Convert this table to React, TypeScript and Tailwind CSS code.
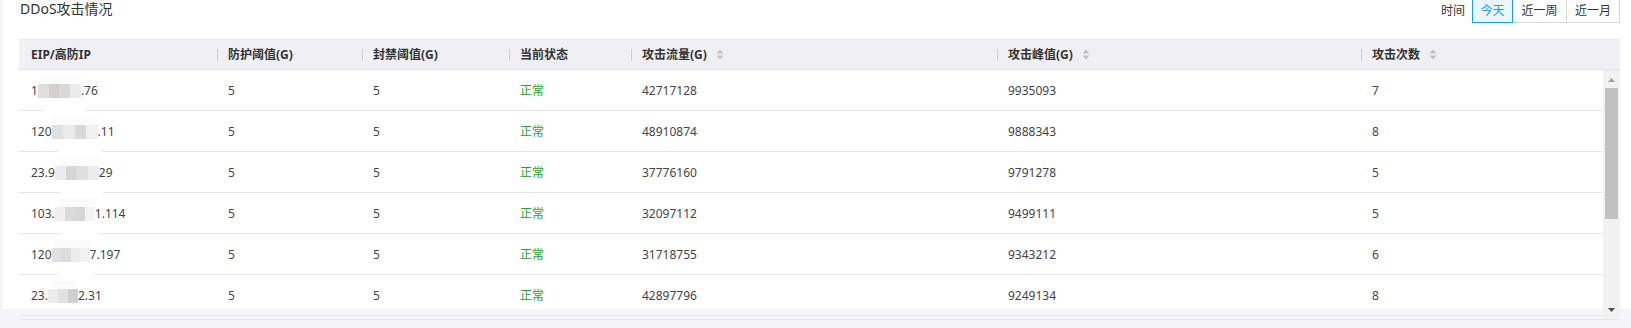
import React from "react";

type Row = {
  pre: string;
  blurW: number;
  suf: string;
  shades: string[];
  patch: boolean;
  v: [string, string, string, string, string];
};

const rows: Row[] = [
  { pre: "1", blurW: 43, suf: ".76", shades: ["#dedede", "#d2d0cf", "#d9d9d9", "#ebebeb"], patch: true, v: ["5", "5", "42717128", "9935093", "7"] },
  { pre: "120", blurW: 46, suf: ".11", shades: ["#e0e0e0", "#eaeaea", "#d9d9d9", "#f0f0f0"], patch: true, v: ["5", "5", "48910874", "9888343", "8"] },
  { pre: "23.9", blurW: 44, suf: "29", shades: ["#ececec", "#d6d6d6", "#dfdfdf", "#ececec"], patch: true, v: ["5", "5", "37776160", "9791278", "5"] },
  { pre: "103.", blurW: 40, suf: "1.114", shades: ["#efefef", "#dadade", "#d6d6d6", "#f2f2f2"], patch: true, v: ["5", "5", "32097112", "9499111", "5"] },
  { pre: "120", blurW: 38, suf: "7.197", shades: ["#e0e0e0", "#dcdcdc", "#ececec", "#f2f2f2"], patch: true, v: ["5", "5", "31718755", "9343212", "6"] },
  { pre: "23.", blurW: 30, suf: "2.31", shades: ["#ececec", "#e2e2e2", "#cfcfcf"], patch: false, v: ["5", "5", "42897796", "9249134", "8"] },
];

const widths = ["w-[197px]", "w-[145px]", "w-[147px]", "w-[122px]", "w-[366px]", "w-[364px]"];

function SortIcon() {
  return (
    <svg width="8" height="11" viewBox="0 0 8 11" className="ml-[9px]">
      <path d="M4 0.5 L7.5 4.5 H0.5 Z" fill="#c0c0c0" />
      <path d="M4 10.5 L7.5 6.5 H0.5 Z" fill="#c0c0c0" />
    </svg>
  );
}

function HeadCell({ label, w, first, sort }: { label: string; w: string; first?: boolean; sort?: boolean }) {
  return (
    <div className={`${w} flex items-center h-full shrink-0 ${first ? "pl-3" : "pl-px"}`}>
      {!first && <span className="w-px h-3 bg-[#cfcfcf] mr-[10px]" />}
      <span>{label}</span>
      {sort && <SortIcon />}
    </div>
  );
}

function Mosaic({ w, shades, patch }: { w: number; shades: string[]; patch: boolean }) {
  const n = shades.length;
  return (
    <span className="relative inline-flex h-[14px]" style={{ width: w }}>
      {shades.map((c, i) => (
        <span key={i} className="h-full" style={{ width: w / n, background: c }} />
      ))}
      {patch && <span className="absolute left-[6px] right-[-4px] top-[14px] h-[18px] bg-white" />}
      <span className="absolute left-[2px] right-[0px] top-[-8px] h-[8px] bg-[#fbfbfb]" />
    </span>
  );
}

export default function App() {
  return (
    <div
      className="w-full h-[328px] bg-[#f5f5f7] pl-[3px] overflow-hidden text-[#333]"
      style={{ fontFamily: '"Noto Sans", "Noto Sans CJK SC", sans-serif' }}
    >
      <div className="bg-white h-[309px] pl-4 pr-[11px]">
        <div className="flex justify-between h-[39px]">
          <div className="text-[14px] leading-5 mt-[-1px] pl-px text-[#333]">DDoS攻击情况</div>
          <div className="flex items-start text-[12px]">
            <span className="leading-[22px] mr-[7px] text-[#333]">时间</span>
            <div className="flex -mt-px">
              <button className="h-[24px] w-[41px] border border-[#1e9bf0] bg-[#eaf6ff] text-[#1e9bf0] leading-[22px] relative z-10">今天</button>
              <button className="h-[24px] w-[55px] border border-[#d9d9d9] -ml-px text-[#333] leading-[22px]">近一周</button>
              <button className="h-[24px] w-[54px] border border-[#d9d9d9] -ml-px text-[#333] leading-[22px]">近一月</button>
            </div>
          </div>
        </div>

        <div className="border-t border-[#e8e8ec]">
          <div className="flex h-[30px] bg-[#f0f0f4] border-b border-[#e2e2e6] text-[12px] font-bold text-[#333]">
            <HeadCell label="EIP/高防IP" w={widths[0]} first />
            <HeadCell label="防护阈值(G)" w={widths[1]} />
            <HeadCell label="封禁阈值(G)" w={widths[2]} />
            <HeadCell label="当前状态" w={widths[3]} />
            <HeadCell label="攻击流量(G)" w={widths[4]} sort />
            <HeadCell label="攻击峰值(G)" w={widths[5]} sort />
            <HeadCell label="攻击次数" w="flex-1" sort />
          </div>
          <div className="flex h-[250px] border-b border-[#e6e6e6] overflow-hidden">
            <div className="flex-1 overflow-hidden text-[12px] text-[#444]">
              {rows.map((r, i) => (
                <div key={i} className="flex h-[41px] pt-[2px] items-center border-b-[1.5px] border-[#e6e6e6] shrink-0">
                  <div className={`${widths[0]} pl-3 flex items-center shrink-0`}>
                    <span>{r.pre}</span>
                    <Mosaic w={r.blurW} shades={r.shades} patch={r.patch} />
                    <span>{r.suf}</span>
                  </div>
                  <div className={`${widths[1]} pl-3 shrink-0`}>{r.v[0]}</div>
                  <div className={`${widths[2]} pl-3 shrink-0`}>{r.v[1]}</div>
                  <div className={`${widths[3]} pl-3 shrink-0 text-[#2aa22a]`}>正常</div>
                  <div className={`${widths[4]} pl-3 shrink-0`}>{r.v[2]}</div>
                  <div className={`${widths[5]} pl-3 shrink-0`}>{r.v[3]}</div>
                  <div className="flex-1 pl-3">{r.v[4]}</div>
                </div>
              ))}
            </div>
            <div className="w-[17px] bg-[#f1f1f1] flex flex-col items-center shrink-0">
              <svg width="7" height="4" viewBox="0 0 7 4" className="mt-[8px]">
                <path d="M3.5 0 L7 4 H0 Z" fill="#a3a3a3" />
              </svg>
              <div className="w-[13px] h-[131px] bg-[#c1c1c1] mt-[6px]" />
              <div className="flex-1" />
              <svg width="7" height="4" viewBox="0 0 7 4" className="mb-[7px]">
                <path d="M0 0 H7 L3.5 4 Z" fill="#505050" />
              </svg>
            </div>
          </div>
        </div>
      </div>
    </div>
  );
}
